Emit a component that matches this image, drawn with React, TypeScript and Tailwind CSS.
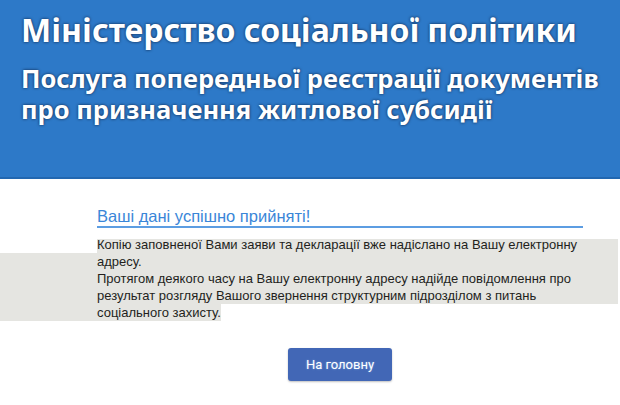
import React from "react";

export default function App() {
  const band = "bg-[#e5e5e1]";
  return (
    <div className="w-[620px] h-[405px] bg-white overflow-hidden font-['Liberation_Sans',Arial,sans-serif]">
      <header className="h-[179px] bg-[#2d79c8] border-b-2 border-[#2267b0] pt-[10px] pl-[21px] text-white font-['Noto_Sans',sans-serif] font-bold [text-shadow:0_0_3px_rgba(0,0,20,0.75)]">
        <h1 className="text-[32px] leading-[40px]">Міністерство соціальної політики</h1>
        <div className="mt-[13px] text-[25.5px] leading-[31px]">
          <h2>Послуга попередньої реєстрації документів</h2>
          <h2>про призначення житлової субсидії</h2>
        </div>
      </header>

      <div className="mt-[27px]">
        <div className="ml-[97px] w-[486px]">
          <h3 className="text-[16.5px] leading-[20px] text-[#3a86d8] border-b-2 border-[#5c9de2]">
            Ваші дані успішно прийняті!
          </h3>
        </div>

        <div className="mt-[8px] text-[13px] leading-[17px] text-[#231f1c]">
          <div className="flex h-[17px] mr-[2px]">
            <div className="w-[97px] shrink-0" />
            <div className="flex-1 bg-[linear-gradient(to_bottom,transparent_3px,#e5e5e1_3px)] whitespace-nowrap">
              Копію заповненої Вами заяви та декларації вже надіслано на Вашу електронну
            </div>
          </div>
          <div className={`${band} mr-[2px] pl-[97px] whitespace-nowrap`}>
            адресу.
            <br />
            Протягом деякого часу на Вашу електронну адресу надійде повідомлення про
            <br />
            результат розгляду Вашого звернення структурним підрозділом з питань
          </div>
          <div className="flex">
            <div className={`${band} pl-[97px] whitespace-nowrap`}>соціального захисту.</div>
          </div>
        </div>

        <div className="ml-[97px] w-[486px] flex justify-center mt-[27px]">
          <button className="w-[104px] h-[33px] rounded-[3px] bg-[#4267b6] text-white text-[13px] font-['Roboto',sans-serif] shadow-[0_1px_2px_rgba(0,0,0,0.25)] [text-shadow:0_0_2px_rgba(180,220,255,0.6)]">
            На головну
          </button>
        </div>
      </div>
    </div>
  );
}
